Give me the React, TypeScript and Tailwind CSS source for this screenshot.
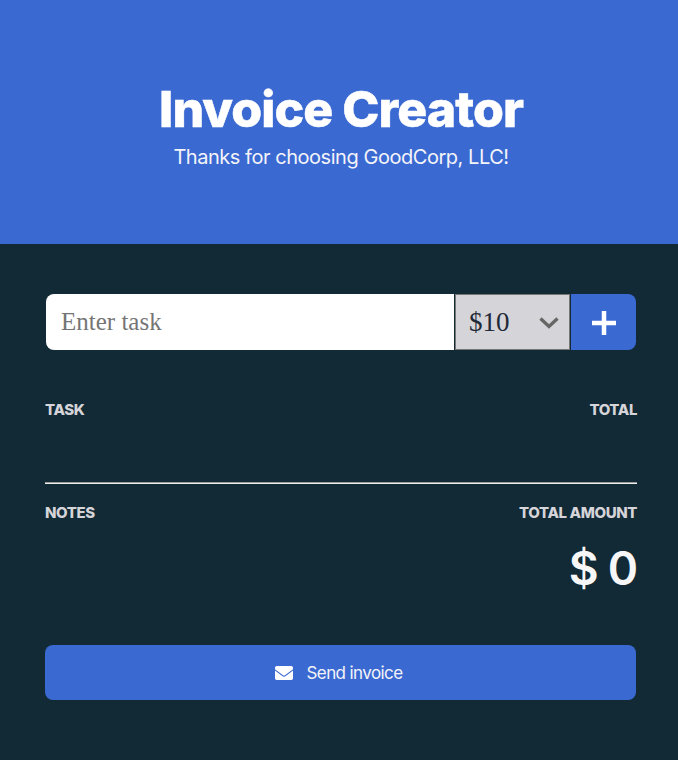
export default function App() {
  return (
    <div className="flex h-[760px] w-[678px] flex-col overflow-hidden bg-[#122936] font-['Inter',sans-serif] text-[#d5d4d8]">
      <header className="flex h-[244px] flex-col items-center bg-[#3a69d2] pt-[79px] pl-[4px]">
        <h1 className="text-[50px] leading-[60px] font-extrabold tracking-[-0.95px] text-white [-webkit-text-stroke:0.5px_white]">Invoice Creator</h1>
        <p className="mt-[5px] text-[20px] leading-[26px] tracking-[-0.46px] text-[#f4f4f8]">Thanks for choosing GoodCorp, LLC!</p>
      </header>
      <main className="flex flex-col pt-[50px] pr-[41px] pl-[45px]">
        <div className="ml-px flex h-14 w-[590px]">
          <input className="w-[408px] rounded-l-lg bg-white pl-[15px] font-['Liberation_Serif',serif] text-[25px] placeholder:text-[#757575]" placeholder="Enter task" />
          <button className="ml-px flex w-[115px] items-center border border-[#767676] bg-[#d5d4d8] pt-px pl-[13px] font-['Liberation_Serif',serif] text-[27px] text-[#1f2937]">
            $10
            <svg className="mt-px ml-[29px]" width="20" height="14" viewBox="0 0 20 14" fill="none" stroke="#666" strokeWidth="3.3"><path d="M1.5 2.5L10 10.5l8.5-8" /></svg>
          </button>
          <button className="ml-px flex flex-1 items-center justify-center rounded-r-lg bg-[#3a69d2] pt-[2px]">
            <svg width="24" height="24" viewBox="0 0 24 24" stroke="#fff" strokeWidth="4.5"><path d="M12 0v24M0 12h24" /></svg>
          </button>
        </div>
        <div className="mt-[50px] flex h-5 justify-between text-[15px] leading-5 font-extrabold tracking-[-0.4px]"><span>TASK</span><span>TOTAL</span></div>
        <div className="mt-[62px] h-[2px] border-t border-b border-t-[#9a9a9a] border-b-[#eeeeee]" />
        <div className="mt-[19px] flex h-5 justify-between text-[15px] leading-5 font-extrabold tracking-[-0.4px]"><span>NOTES</span><span>TOTAL AMOUNT</span></div>
        <div className="mt-[15px] text-right text-[46px] leading-[60px] font-semibold tracking-[-1.2px] text-[#f7f7f8]">$ 0</div>
        <button className="mt-[47px] flex h-[55px] w-[591px] items-center justify-center rounded-lg bg-[#3a69d2] pr-[4px] text-[17px] tracking-[-0.6px] text-[#f4f4f8]">
          <svg className="mr-[14px]" width="18" height="14" viewBox="0 0 18 14" fill="#fff"><path d="M0 1.7A1.7 1.7 0 0 1 1.7 0h14.6A1.7 1.7 0 0 1 18 1.7v1.5L10.3 9a2 2 0 0 1-2.6 0L0 3.2zM0 4.4l7.2 5.5a2.8 2.8 0 0 0 3.6 0L18 4.4v7.9a1.7 1.7 0 0 1-1.7 1.7H1.7A1.7 1.7 0 0 1 0 12.3z" /></svg>
          <span className="pt-[2px]">Send invoice</span>
        </button>
      </main>
    </div>
  );
}
